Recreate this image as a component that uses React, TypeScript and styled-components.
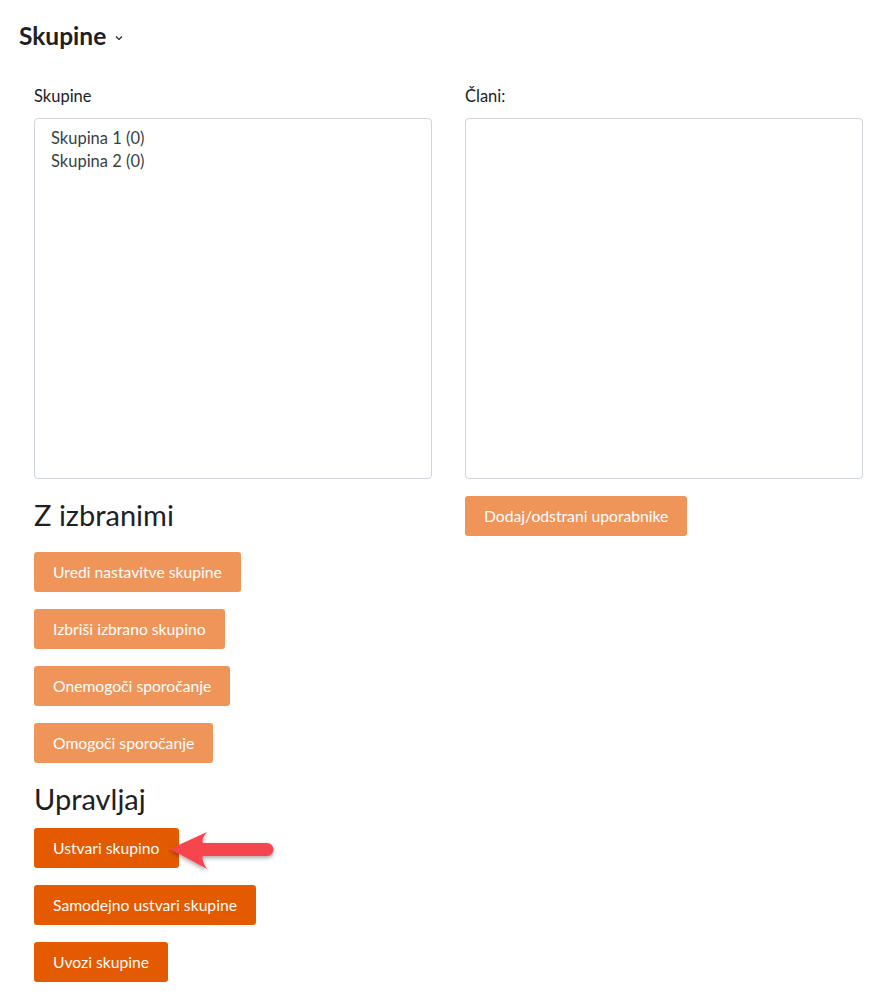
import React from 'react'
import styled, { createGlobalStyle } from 'styled-components'

const GlobalStyle = createGlobalStyle`
  body {
    margin: 0;
    background: #fff;
    font-family: Lato, "Open Sans", sans-serif;
    color: #1d2125;
  }
`

const Page = styled.div`
  position: relative;
  padding: 20px 0 30px 19px;
`

const TitleRow = styled.div`
  display: flex;
  align-items: center;
  gap: 8px;
  height: 30px;
`

const Title = styled.h2`
  margin: 0;
  font-size: 24.5px;
  font-weight: 700;
  color: #1d2125;
`

const Chevron = styled.svg`
  width: 10px;
  height: 10px;
  margin-top: 5px;
`

const Form = styled.div`
  padding-left: 15px;
  margin-top: 36px;
  width: 829px;
`

const Columns = styled.div`
  display: grid;
  grid-template-columns: 398px 398px;
  column-gap: 33px;
`

const Column = styled.div`
  display: flex;
  flex-direction: column;
  align-items: flex-start;
`

const FieldLabel = styled.label`
  font-size: 16.5px;
  line-height: 20px;
  margin-bottom: 12px;
`

const ListBox = styled.div`
  box-sizing: border-box;
  width: 100%;
  height: 361px;
  border: 1px solid #ced4da;
  border-radius: 4px;
  padding: 8px 16px;
`

const ListItem = styled.div`
  font-size: 16.5px;
  line-height: 23px;
  color: #3a3f44;
`

const SectionHeading = styled.h3`
  margin: 0;
  font-size: 29px;
  font-weight: 400;
  line-height: 34px;
`

const ButtonStack = styled.div`
  display: flex;
  flex-direction: column;
  align-items: flex-start;
  gap: 17px;
`

const Button = styled.button<{ $strong?: boolean }>`
  height: 40px;
  padding: 0 19px;
  border: none;
  border-radius: 3px;
  font-family: Lato, "Open Sans", sans-serif;
  font-size: 15.7px;
  color: #fff;
  background: ${p => (p.$strong ? '#e35a00' : '#ef955a')};
  cursor: pointer;
`

const Arrow = styled.svg`
  position: absolute;
  left: 160px;
  top: 822px;
  width: 125px;
  height: 56px;
  overflow: visible;
`

export default function App() {
  return (
    <>
      <GlobalStyle />
      <Page>
        <TitleRow>
          <Title>Skupine</Title>
          <Chevron viewBox="0 0 10 10">
            <path d="M2 3.5 L5 6.5 L8 3.5" fill="none" stroke="#1d2125" strokeWidth="1.2" />
          </Chevron>
        </TitleRow>
        <Form>
          <Columns>
            <Column>
              <FieldLabel>Skupine</FieldLabel>
              <ListBox>
                <ListItem>Skupina 1 (0)</ListItem>
                <ListItem>Skupina 2 (0)</ListItem>
              </ListBox>
              <div style={{ marginTop: 19 }} />
              <SectionHeading>Z izbranimi</SectionHeading>
              <div style={{ marginTop: 20 }} />
              <ButtonStack>
                <Button>Uredi nastavitve skupine</Button>
                <Button>Izbriši izbrano skupino</Button>
                <Button>Onemogoči sporočanje</Button>
                <Button>Omogoči sporočanje</Button>
              </ButtonStack>
              <div style={{ marginTop: 19 }} />
              <SectionHeading>Upravljaj</SectionHeading>
              <div style={{ marginTop: 12 }} />
              <ButtonStack>
                <Button $strong>Ustvari skupino</Button>
                <Button $strong>Samodejno ustvari skupine</Button>
                <Button $strong>Uvozi skupine</Button>
              </ButtonStack>
            </Column>
            <Column>
              <FieldLabel>Člani:</FieldLabel>
              <ListBox />
              <div style={{ marginTop: 17 }} />
              <Button>Dodaj/odstrani uporabnike</Button>
            </Column>
          </Columns>
        </Form>
        <Arrow viewBox="160 822 125 56">
          <defs>
            <filter id="shadow" x="-20%" y="-40%" width="140%" height="200%">
              <feDropShadow dx="0" dy="2" stdDeviation="2" floodColor="#000" floodOpacity="0.35" />
            </filter>
          </defs>
          <path
            d="M170 849 L207 832 Q201 839 203 843 L267 843 A6.5 6.5 0 0 1 267 856 L203 856 Q201 860 207 869 Z"
            fill="#f7444e"
            filter="url(#shadow)"
          />
        </Arrow>
      </Page>
    </>
  )
}
